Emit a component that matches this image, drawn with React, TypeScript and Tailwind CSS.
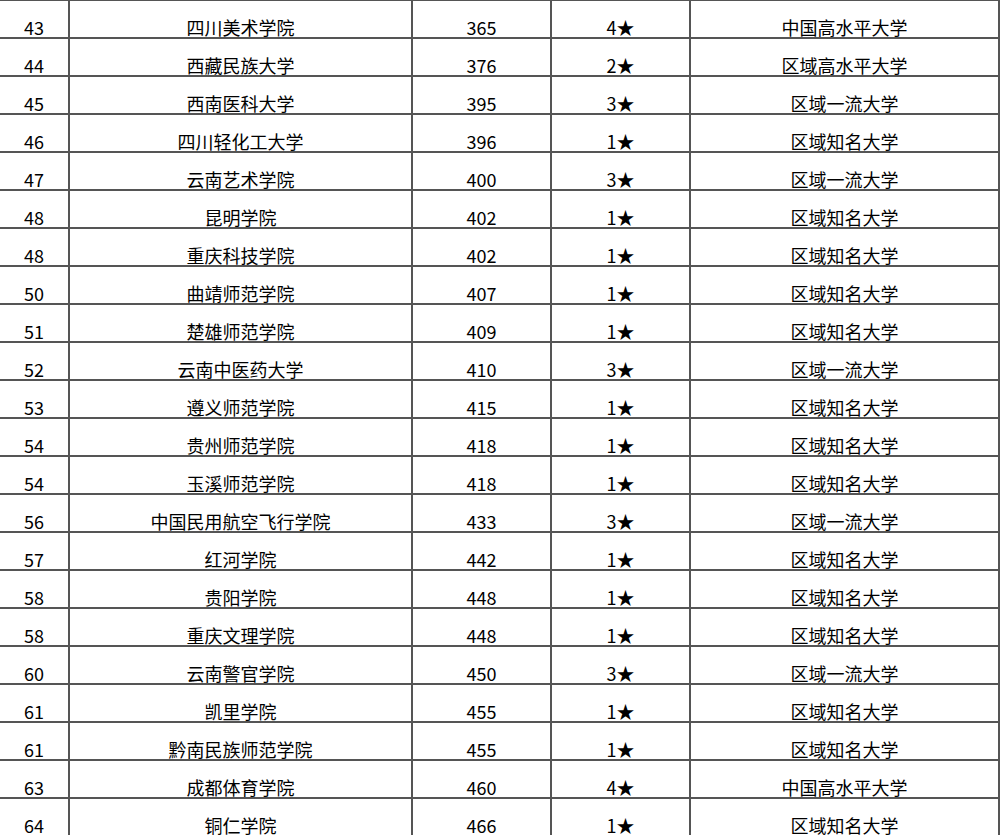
import React from "react";

type Row = [string, string, string, string, string];

const rows: Row[] = [
  ["43", "四川美术学院", "365", "4★", "中国高水平大学"],
  ["44", "西藏民族大学", "376", "2★", "区域高水平大学"],
  ["45", "西南医科大学", "395", "3★", "区域一流大学"],
  ["46", "四川轻化工大学", "396", "1★", "区域知名大学"],
  ["47", "云南艺术学院", "400", "3★", "区域一流大学"],
  ["48", "昆明学院", "402", "1★", "区域知名大学"],
  ["48", "重庆科技学院", "402", "1★", "区域知名大学"],
  ["50", "曲靖师范学院", "407", "1★", "区域知名大学"],
  ["51", "楚雄师范学院", "409", "1★", "区域知名大学"],
  ["52", "云南中医药大学", "410", "3★", "区域一流大学"],
  ["53", "遵义师范学院", "415", "1★", "区域知名大学"],
  ["54", "贵州师范学院", "418", "1★", "区域知名大学"],
  ["54", "玉溪师范学院", "418", "1★", "区域知名大学"],
  ["56", "中国民用航空飞行学院", "433", "3★", "区域一流大学"],
  ["57", "红河学院", "442", "1★", "区域知名大学"],
  ["58", "贵阳学院", "448", "1★", "区域知名大学"],
  ["58", "重庆文理学院", "448", "1★", "区域知名大学"],
  ["60", "云南警官学院", "450", "3★", "区域一流大学"],
  ["61", "凯里学院", "455", "1★", "区域知名大学"],
  ["61", "黔南民族师范学院", "455", "1★", "区域知名大学"],
  ["63", "成都体育学院", "460", "4★", "中国高水平大学"],
  ["64", "铜仁学院", "466", "1★", "区域知名大学"],
];

export default function App() {
  return (
    <div
      className="h-[837px] w-[1000px] overflow-hidden bg-white"
      style={{ fontFamily: '"Noto Sans CJK SC", "Noto Sans", sans-serif' }}
    >
      {/* grid lines come from the gray background showing through the gaps */}
      <div className="grid grid-cols-[68px_341px_137px_137px_307px] gap-[2px] bg-[#555] pt-[1px] pr-[2px]">
        {rows.map((r, i) =>
          r.map((cell, j) => (
            <div
              key={`${i}-${j}`}
              className="flex h-[36px] items-end justify-center bg-white pb-[1px] text-[18px] leading-none text-black"
            >
              {cell}
            </div>
          ))
        )}
      </div>
    </div>
  );
}
